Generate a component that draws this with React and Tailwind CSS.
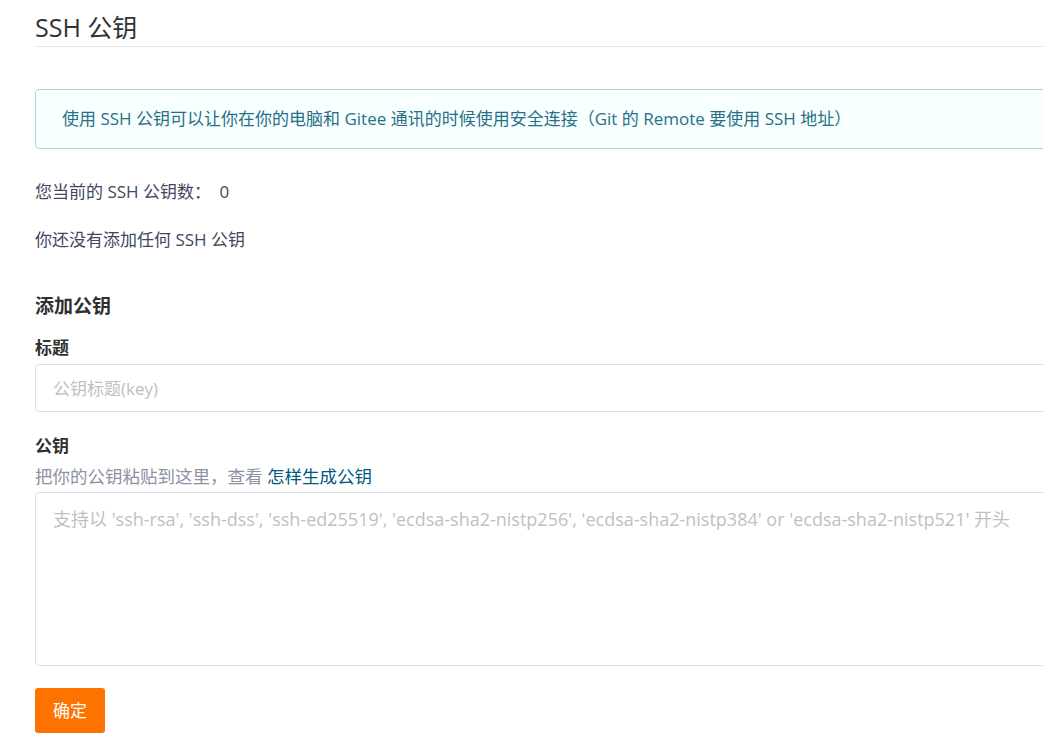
const SshKeys = () => {
    return (
        <div className="w-screen h-screen overflow-hidden bg-white" style={{ fontFamily: '"Open Sans", "Noto Sans CJK SC", sans-serif' }}>
            <div className="ml-[35px] w-[1100px] text-[#40485b] text-[17px]">
                <h1 className="pt-3 pb-[4px] text-[25px] leading-[30px] font-normal text-[#333] border-b border-[#e3e3e3]">SSH 公钥</h1>

                <div className="mt-[42px] px-[26px] py-[17px] leading-[24px] text-[17px] bg-[#f8ffff] text-[#276f86] border border-[#a9d5de] rounded-[4px]">
                    使用 SSH 公钥可以让你在你的电脑和 Gitee 通讯的时候使用安全连接（Git 的 Remote 要使用 SSH 地址）
                </div>

                <p className="mt-[31px] leading-[24px]">您当前的 SSH 公钥数： <span className="ml-1">0</span></p>
                <p className="mt-[24px] leading-[24px]">你还没有添加任何 SSH 公钥</p>

                <h3 className="mt-[40px] text-[19px] leading-[28px] font-bold text-[#303030]">添加公钥</h3>

                <label className="block mt-[16px] leading-[24px] font-bold text-[#303030]">标题</label>
                <input
                    type="text"
                    placeholder="公钥标题(key)"
                    className="block mt-[4px] w-full h-[48px] pl-[17px] border border-[#dcdfe6] rounded-[4px] text-[17px] placeholder:text-[#bfbfbf] outline-none"
                />

                <label className="block mt-[22px] leading-[24px] font-bold text-[#303030]">公钥</label>
                <p className="mt-[6px] leading-[24px] text-[17.5px] text-[#8c92a4]">
                    把你的公钥粘贴到这里，查看 <a href="#" className="text-[#005980]">怎样生成公钥</a>
                </p>
                <textarea
                    placeholder="支持以 'ssh-rsa', 'ssh-dss', 'ssh-ed25519', 'ecdsa-sha2-nistp256', 'ecdsa-sha2-nistp384' or 'ecdsa-sha2-nistp521' 开头"
                    className="block mt-[4px] w-full h-[174px] px-[17px] py-[14px] leading-[24px] border border-[#dcdfe6] rounded-[4px] text-[18px] placeholder:text-[#bfbfbf] outline-none resize-none"
                />

                <button className="mt-[22px] w-[70px] h-[45px] bg-[#fe7300] text-white text-[17px] rounded-[3px]">确定</button>
            </div>
        </div>
    );
};

export default SshKeys;
